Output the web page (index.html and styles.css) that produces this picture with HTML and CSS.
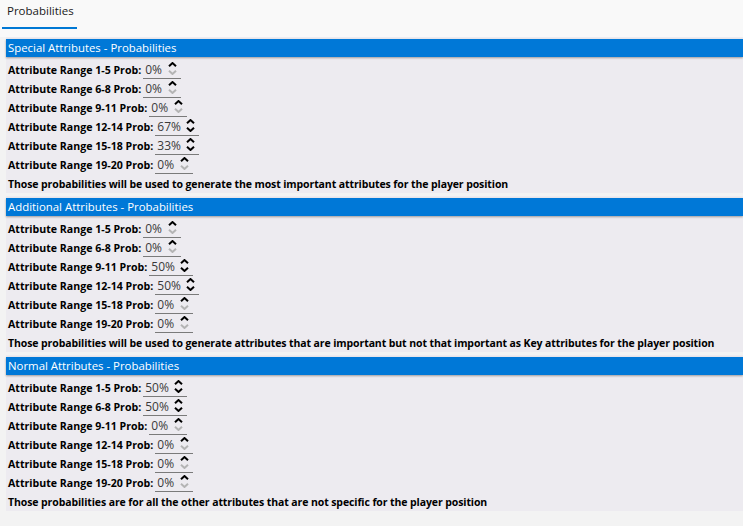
FILE: index.html
```html
<!DOCTYPE html>
<html>
<head>
<meta charset="utf-8">
<link rel="stylesheet" href="styles.css">
</head>
<body>
<div class="tabs"><div class="tab">Probabilities</div></div>
<div class="content">
  <section class="group">
    <div class="group-header">Special Attributes - Probabilities</div>
    <div class="row"><span class="label">Attribute Range 1-5 Prob:</span><span class="spin"><span class="val">0%</span><span class="arrows"><svg class="up" viewBox="0 0 9 5"><polyline points="1,4.2 4.5,1 8,4.2"/></svg><svg class="down off" viewBox="0 0 9 5"><polyline points="1,0.8 4.5,4 8,0.8"/></svg></span></span></div>
    <div class="row"><span class="label">Attribute Range 6-8 Prob:</span><span class="spin"><span class="val">0%</span><span class="arrows"><svg class="up" viewBox="0 0 9 5"><polyline points="1,4.2 4.5,1 8,4.2"/></svg><svg class="down off" viewBox="0 0 9 5"><polyline points="1,0.8 4.5,4 8,0.8"/></svg></span></span></div>
    <div class="row"><span class="label">Attribute Range 9-11 Prob:</span><span class="spin"><span class="val">0%</span><span class="arrows"><svg class="up" viewBox="0 0 9 5"><polyline points="1,4.2 4.5,1 8,4.2"/></svg><svg class="down off" viewBox="0 0 9 5"><polyline points="1,0.8 4.5,4 8,0.8"/></svg></span></span></div>
    <div class="row"><span class="label">Attribute Range 12-14 Prob:</span><span class="spin"><span class="val">67%</span><span class="arrows"><svg class="up" viewBox="0 0 9 5"><polyline points="1,4.2 4.5,1 8,4.2"/></svg><svg class="down" viewBox="0 0 9 5"><polyline points="1,0.8 4.5,4 8,0.8"/></svg></span></span></div>
    <div class="row"><span class="label">Attribute Range 15-18 Prob:</span><span class="spin"><span class="val">33%</span><span class="arrows"><svg class="up" viewBox="0 0 9 5"><polyline points="1,4.2 4.5,1 8,4.2"/></svg><svg class="down" viewBox="0 0 9 5"><polyline points="1,0.8 4.5,4 8,0.8"/></svg></span></span></div>
    <div class="row"><span class="label">Attribute Range 19-20 Prob:</span><span class="spin"><span class="val">0%</span><span class="arrows"><svg class="up" viewBox="0 0 9 5"><polyline points="1,4.2 4.5,1 8,4.2"/></svg><svg class="down off" viewBox="0 0 9 5"><polyline points="1,0.8 4.5,4 8,0.8"/></svg></span></span></div>
    <div class="desc">Those probabilities will be used to generate the most important attributes for the player position</div>
  </section>
  <section class="group">
    <div class="group-header">Additional Attributes - Probabilities</div>
    <div class="row"><span class="label">Attribute Range 1-5 Prob:</span><span class="spin"><span class="val">0%</span><span class="arrows"><svg class="up" viewBox="0 0 9 5"><polyline points="1,4.2 4.5,1 8,4.2"/></svg><svg class="down off" viewBox="0 0 9 5"><polyline points="1,0.8 4.5,4 8,0.8"/></svg></span></span></div>
    <div class="row"><span class="label">Attribute Range 6-8 Prob:</span><span class="spin"><span class="val">0%</span><span class="arrows"><svg class="up" viewBox="0 0 9 5"><polyline points="1,4.2 4.5,1 8,4.2"/></svg><svg class="down off" viewBox="0 0 9 5"><polyline points="1,0.8 4.5,4 8,0.8"/></svg></span></span></div>
    <div class="row"><span class="label">Attribute Range 9-11 Prob:</span><span class="spin"><span class="val">50%</span><span class="arrows"><svg class="up" viewBox="0 0 9 5"><polyline points="1,4.2 4.5,1 8,4.2"/></svg><svg class="down" viewBox="0 0 9 5"><polyline points="1,0.8 4.5,4 8,0.8"/></svg></span></span></div>
    <div class="row"><span class="label">Attribute Range 12-14 Prob:</span><span class="spin"><span class="val">50%</span><span class="arrows"><svg class="up" viewBox="0 0 9 5"><polyline points="1,4.2 4.5,1 8,4.2"/></svg><svg class="down" viewBox="0 0 9 5"><polyline points="1,0.8 4.5,4 8,0.8"/></svg></span></span></div>
    <div class="row"><span class="label">Attribute Range 15-18 Prob:</span><span class="spin"><span class="val">0%</span><span class="arrows"><svg class="up" viewBox="0 0 9 5"><polyline points="1,4.2 4.5,1 8,4.2"/></svg><svg class="down off" viewBox="0 0 9 5"><polyline points="1,0.8 4.5,4 8,0.8"/></svg></span></span></div>
    <div class="row"><span class="label">Attribute Range 19-20 Prob:</span><span class="spin"><span class="val">0%</span><span class="arrows"><svg class="up" viewBox="0 0 9 5"><polyline points="1,4.2 4.5,1 8,4.2"/></svg><svg class="down off" viewBox="0 0 9 5"><polyline points="1,0.8 4.5,4 8,0.8"/></svg></span></span></div>
    <div class="desc">Those probabilities will be used to generate attributes that are important but not that important as Key attributes for the player position</div>
  </section>
  <section class="group">
    <div class="group-header">Normal Attributes - Probabilities</div>
    <div class="row"><span class="label">Attribute Range 1-5 Prob:</span><span class="spin"><span class="val">50%</span><span class="arrows"><svg class="up" viewBox="0 0 9 5"><polyline points="1,4.2 4.5,1 8,4.2"/></svg><svg class="down" viewBox="0 0 9 5"><polyline points="1,0.8 4.5,4 8,0.8"/></svg></span></span></div>
    <div class="row"><span class="label">Attribute Range 6-8 Prob:</span><span class="spin"><span class="val">50%</span><span class="arrows"><svg class="up" viewBox="0 0 9 5"><polyline points="1,4.2 4.5,1 8,4.2"/></svg><svg class="down" viewBox="0 0 9 5"><polyline points="1,0.8 4.5,4 8,0.8"/></svg></span></span></div>
    <div class="row"><span class="label">Attribute Range 9-11 Prob:</span><span class="spin"><span class="val">0%</span><span class="arrows"><svg class="up" viewBox="0 0 9 5"><polyline points="1,4.2 4.5,1 8,4.2"/></svg><svg class="down off" viewBox="0 0 9 5"><polyline points="1,0.8 4.5,4 8,0.8"/></svg></span></span></div>
    <div class="row"><span class="label">Attribute Range 12-14 Prob:</span><span class="spin"><span class="val">0%</span><span class="arrows"><svg class="up" viewBox="0 0 9 5"><polyline points="1,4.2 4.5,1 8,4.2"/></svg><svg class="down off" viewBox="0 0 9 5"><polyline points="1,0.8 4.5,4 8,0.8"/></svg></span></span></div>
    <div class="row"><span class="label">Attribute Range 15-18 Prob:</span><span class="spin"><span class="val">0%</span><span class="arrows"><svg class="up" viewBox="0 0 9 5"><polyline points="1,4.2 4.5,1 8,4.2"/></svg><svg class="down off" viewBox="0 0 9 5"><polyline points="1,0.8 4.5,4 8,0.8"/></svg></span></span></div>
    <div class="row"><span class="label">Attribute Range 19-20 Prob:</span><span class="spin"><span class="val">0%</span><span class="arrows"><svg class="up" viewBox="0 0 9 5"><polyline points="1,4.2 4.5,1 8,4.2"/></svg><svg class="down off" viewBox="0 0 9 5"><polyline points="1,0.8 4.5,4 8,0.8"/></svg></span></span></div>
    <div class="desc">Those probabilities are for all the other attributes that are not specific for the player position</div>
  </section>
</div>
</body>
</html>
```

FILE: styles.css
```css
html, body {
  margin: 0;
  padding: 0;
}
body {
  background: #f3f3f3;
  font-family: "Open Sans", "Noto Sans", "Liberation Sans", sans-serif;
  color: #000;
  width: 743px;
  height: 526px;
  overflow: hidden;
}
.tabs {
  height: 37px;
  background: #f9f9f9;
  display: flex;
  align-items: flex-start;
}
.tab {
  margin-left: 2px;
  width: 70px;
  padding-left: 5px;
  height: 27px;
  line-height: 22px;
  font-size: 11.5px;
  color: #1a1a1a;
  border-bottom: 2px solid #0078d4;
}
.content {
  display: flex;
  flex-direction: column;
  gap: 3px;
  margin-left: 6px;
}
.group {
  background: #edebf0;
  padding-top: 2px;
  height: 156px;
  box-sizing: border-box;
}
.group-header {
  height: 18px;
  line-height: 18px;
  background: #0078d7;
  color: #fff;
  font-size: 11.4px;
  padding-left: 2px;
  margin-bottom: 3px;
  box-shadow: 0 1px 2px rgba(0, 0, 0, 0.35);
}
.row {
  height: 19px;
  display: flex;
  align-items: center;
  padding-left: 2px;
}
.label {
  font-weight: 700;
  font-size: 10.6px;
  letter-spacing: 0;
}
.spin {
  margin-left: 2px;
  height: 19px;
  box-sizing: border-box;
  border-bottom: 1px solid #7a7a7a;
  display: flex;
  align-items: center;
  padding: 0 4px 0 2px;
}
.val {
  font-size: 12px;
  color: #3a3a3a;
  min-width: 18px;
}
.arrows {
  display: flex;
  flex-direction: column;
  gap: 3px;
  margin-left: 5px;
  margin-top: -2px;
}
.arrows svg {
  width: 9px;
  height: 5px;
  display: block;
}
.arrows polyline {
  fill: none;
  stroke: #000;
  stroke-width: 2;
  stroke-linecap: butt;
  stroke-linejoin: miter;
}
.arrows svg.off polyline {
  stroke: #b4b4b4;
}
.desc {
  height: 19px;
  display: flex;
  align-items: center;
  padding-left: 2px;
  font-weight: 700;
  font-size: 10.5px;
  letter-spacing: -0.1px;
}
```
